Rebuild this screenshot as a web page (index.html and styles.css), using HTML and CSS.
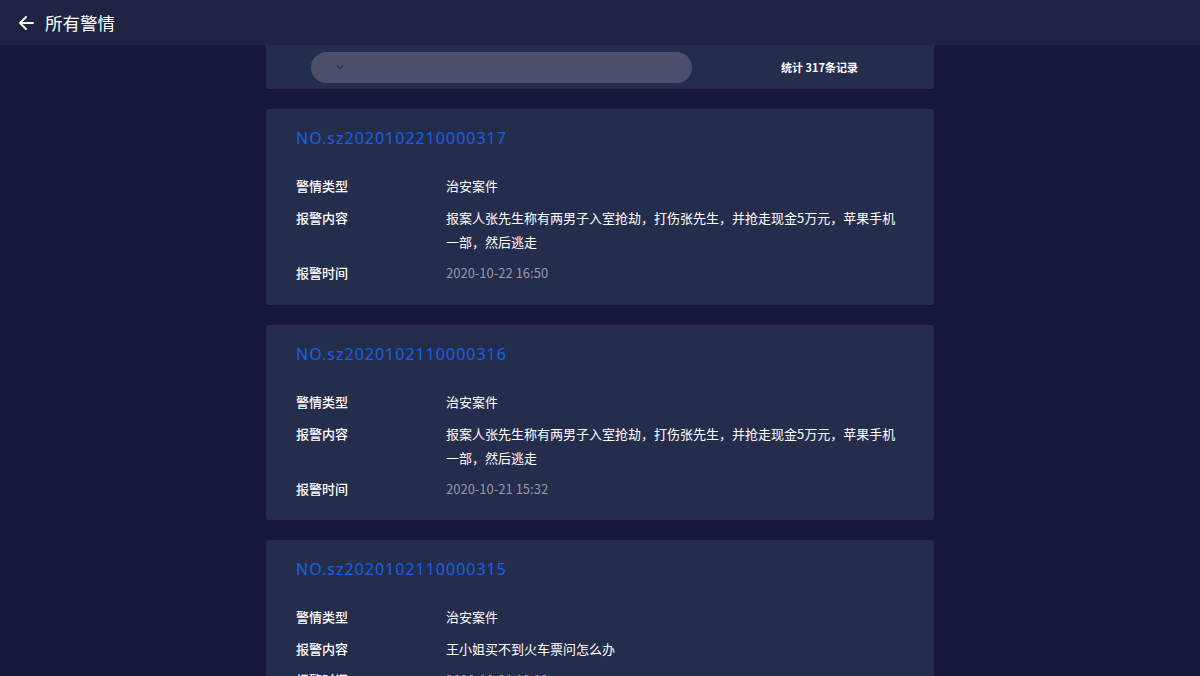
FILE: index.html
```html
<!DOCTYPE html>
<html lang="zh-CN">
<head>
<meta charset="utf-8">
<title>所有警情</title>
<link rel="stylesheet" href="styles.css">
</head>
<body>
<header class="topbar">
  <svg class="back" width="16" height="16" viewBox="0 0 16 16"><path d="M15 8H2M8 2L2 8l6 6" fill="none" stroke="#ffffff" stroke-width="1.8" stroke-linecap="round" stroke-linejoin="round"/></svg>
  <span class="page-title">所有警情</span>
</header>
<main class="content">
  <div class="filter card-bg">
    <div class="select">
      <svg class="chev" width="8" height="6" viewBox="0 0 8 6"><path d="M1 1.5l3 3 3-3" fill="none" stroke="#2e3347" stroke-width="1.4"/></svg>
    </div>
    <div class="count">统计 317条记录</div>
  </div>

  <section class="card card-bg">
    <div class="no">NO.sz2020102210000317</div>
    <div class="row"><span class="label">警情类型</span><span class="val">治安案件</span></div>
    <div class="row"><span class="label">报警内容</span><span class="val">报案人张先生称有两男子入室抢劫，打伤张先生，并抢走现金5万元，苹果手机一部，然后逃走</span></div>
    <div class="row row-time"><span class="label">报警时间</span><span class="val time">2020-10-22 16:50</span></div>
  </section>

  <section class="card card-bg">
    <div class="no">NO.sz2020102110000316</div>
    <div class="row"><span class="label">警情类型</span><span class="val">治安案件</span></div>
    <div class="row"><span class="label">报警内容</span><span class="val">报案人张先生称有两男子入室抢劫，打伤张先生，并抢走现金5万元，苹果手机一部，然后逃走</span></div>
    <div class="row row-time"><span class="label">报警时间</span><span class="val time">2020-10-21 15:32</span></div>
  </section>

  <section class="card card-bg">
    <div class="no">NO.sz2020102110000315</div>
    <div class="row"><span class="label">警情类型</span><span class="val">治安案件</span></div>
    <div class="row"><span class="label">报警内容</span><span class="val">王小姐买不到火车票问怎么办</span></div>
    <div class="row row-time"><span class="label">报警时间</span><span class="val time">2020-10-21 10:12</span></div>
  </section>
</main>
</body>
</html>
```
FILE: styles.css
```css
html, body {
  margin: 0;
  padding: 0;
}
body {
  background: #161a38;
  font-family: "Noto Sans CJK SC", "Noto Sans", sans-serif;
  color: #ffffff;
  height: 676px;
  overflow: hidden;
}
.topbar {
  height: 45px;
  background: #1e2442;
  display: flex;
  align-items: center;
  padding-left: 18px;
  box-sizing: border-box;
}
.back {
  display: block;
  margin-right: 11px;
}
.page-title {
  font-size: 17.5px;
  line-height: 24px;
  color: #ffffff;
}
.content {
  width: 668px;
  margin: 0 auto;
  display: flex;
  flex-direction: column;
  gap: 20px;
}
.card-bg {
  background: #252d4d;
  border-radius: 3px;
}
.filter {
  height: 44px;
  border-radius: 0 0 3px 3px;
  display: flex;
  align-items: center;
  padding-left: 45px;
}
.select {
  width: 381px;
  height: 31px;
  border-radius: 16px;
  background: #4a506c;
  display: flex;
  align-items: center;
  padding-left: 25px;
  box-sizing: border-box;
}
.chev {
  display: block;
}
.count {
  margin-left: 89px;
  font-size: 11px;
  font-weight: 700;
  color: #ffffff;
}
.card {
  padding: 19px 30px 19.5px;
}
.no {
  font-family: "Noto Sans", "Noto Sans CJK SC", sans-serif;
  font-size: 16px;
  line-height: 20px;
  letter-spacing: 1px;
  color: #1860e6;
  margin-bottom: 26px;
}
.row {
  display: flex;
  font-size: 13px;
  line-height: 24px;
}
.row + .row {
  margin-top: 8px;
}
.row + .row-time {
  margin-top: 7px;
}
.label {
  flex: 0 0 150px;
  font-weight: 500;
}
.val {
  flex: 1;
}
.time {
  color: #9696a4;
}
```
